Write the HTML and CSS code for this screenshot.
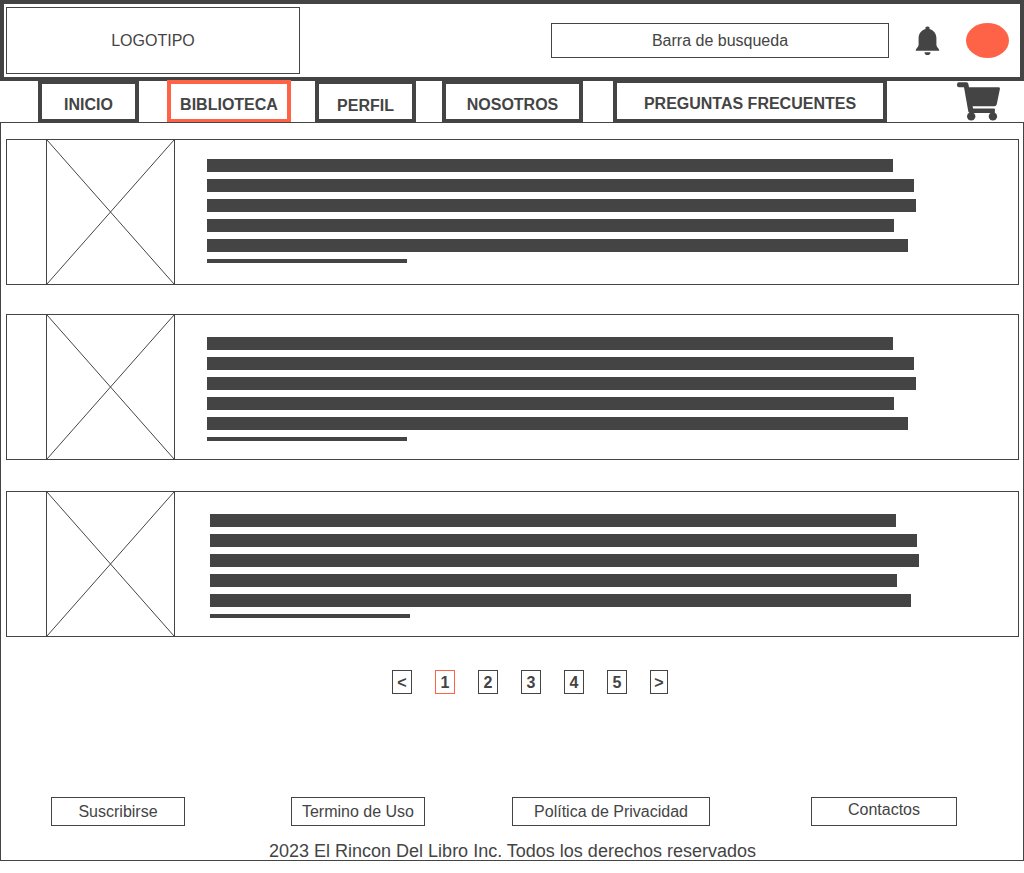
FILE: index.html
```html
<!DOCTYPE html>
<html lang="es">
<head>
<meta charset="utf-8">
<meta name="viewport" content="width=device-width, initial-scale=1">
<title>El Rincon Del Libro</title>
<link rel="stylesheet" href="styles.css">
</head>
<body>
<header class="header">
  <a class="logo" href="#">LOGOTIPO</a>
  <input class="search" type="text" placeholder="Barra de busqueda" aria-label="Barra de busqueda">
  <button class="icon-button bell" type="button" aria-label="Notificaciones">
    <svg width="25" height="30" viewBox="0 0 25 30" fill="currentColor" aria-hidden="true">
      <path d="M12.5.5a2 2 0 0 1 2 2.4C18.500 4 21.400 7.500 21.400 12V18.500C21.400 21.300 24 22 24.300 24.700H.7C1 22 3.600 21.300 3.600 18.500V12C3.600 7.500 6.500 4 10.500 2.900A2 2 0 0 1 12.500.5z"/>
      <path d="M9.500 26.200h6a3 2.800 0 0 1-6 0z"/>
    </svg>
  </button>
  <button class="avatar" type="button" aria-label="Cuenta"></button>
</header>

<nav class="nav" aria-label="Principal">
  <a class="tab inicio" href="#">INICIO</a>
  <a class="tab biblioteca active" href="#" aria-current="page">BIBLIOTECA</a>
  <a class="tab perfil" href="#">PERFIL</a>
  <a class="tab nosotros" href="#">NOSOTROS</a>
  <a class="tab preguntas" href="#">PREGUNTAS FRECUENTES</a>
  <button class="icon-button cart" type="button" aria-label="Carrito">
    <svg width="43" height="39" viewBox="0 0 43 39" fill="currentColor" aria-hidden="true">
      <path d="M2 .3H9.500Q11 .3 11.300 1.800L12 5.200H41.500Q43.200 5.200 42.900 6.900L39.700 22.400Q39.300 24.200 37.500 24.200H15.600L16.100 26.500H36.800Q38.200 26.500 38 28L37.700 30.900H13Q11.600 30.900 11.300 29.500L7 5.300H2A2 2 0 0 1 0 3.300V2.300A2 2 0 0 1 2 .3z"/>
      <circle cx="14.200" cy="34.400" r="4.200"/>
      <circle cx="35.900" cy="34.400" r="4.200"/>
    </svg>
  </button>
</nav>

<div class="frame">
  <main class="books">
    <article class="card first">
      <svg class="cover" viewBox="0 0 127 144" preserveAspectRatio="none" role="img" aria-label="Portada"><path d="M0 0L127 144M127 0L0 144"/></svg>
      <div class="lines"><i class="line a"></i><i class="line b"></i><i class="line c"></i><i class="line d"></i><i class="line e"></i><i class="line end"></i></div>
    </article>
    <article class="card">
      <svg class="cover" viewBox="0 0 127 144" preserveAspectRatio="none" role="img" aria-label="Portada"><path d="M0 0L127 144M127 0L0 144"/></svg>
      <div class="lines"><i class="line a"></i><i class="line b"></i><i class="line c"></i><i class="line d"></i><i class="line e"></i><i class="line end"></i></div>
    </article>
    <article class="card last">
      <svg class="cover" viewBox="0 0 127 144" preserveAspectRatio="none" role="img" aria-label="Portada"><path d="M0 0L127 144M127 0L0 144"/></svg>
      <div class="lines"><i class="line a"></i><i class="line b"></i><i class="line c"></i><i class="line d"></i><i class="line e"></i><i class="line end"></i></div>
    </article>
  </main>

  <nav class="pages" aria-label="Paginas">
    <a class="page" href="#">&lt;</a>
    <a class="page current" href="#" aria-current="page">1</a>
    <a class="page" href="#">2</a>
    <a class="page" href="#">3</a>
    <a class="page" href="#">4</a>
    <a class="page" href="#">5</a>
    <a class="page next" href="#">&gt;</a>
  </nav>

  <footer class="footer">
    <div class="links">
      <a class="link" href="#">Suscribirse</a>
      <a class="link terms" href="#">Termino de Uso</a>
      <a class="link privacy" href="#">Política de Privacidad</a>
      <a class="link contact" href="#">Contactos</a>
    </div>
    <p class="copyright">2023 El Rincon Del Libro Inc. Todos los derechos reservados</p>
  </footer>
</div>
</body>
</html>
```
FILE: styles.css
```css
:root {
  --ink: #444;
  --accent: #ff6347;
}

* {
  box-sizing: border-box;
}

body {
  margin: 0;
  background: #fff;
  color: var(--ink);
  font: 16px/20px "Liberation Sans", Arial, sans-serif;
}

a {
  color: inherit;
  text-decoration: none;
}

.header {
  display: flex;
  align-items: center;
  padding: 3px 11px 3px 2px;
  border: 4px solid var(--ink);
}

.logo {
  display: flex;
  align-items: center;
  justify-content: center;
  flex: 0 1 294px;
  height: 67px;
  border: 1px solid var(--ink);
}

.search {
  flex: 0 1 338px;
  min-width: 0;
  height: 35px;
  margin: 0 26px 0 auto;
  padding: 0 8px;
  border: 1px solid var(--ink);
  border-radius: 0;
  background: #fff;
  color: var(--ink);
  font: inherit;
  text-align: center;
  appearance: none;
}

.search::placeholder {
  color: var(--ink);
  opacity: 1;
}

.icon-button {
  flex: none;
  padding: 0;
  border: 0;
  background: none;
  color: var(--ink);
}

.icon-button svg {
  display: block;
}

.avatar {
  flex: none;
  width: 43px;
  height: 35px;
  margin-left: 26px;
  padding: 0;
  border: 0;
  border-radius: 50%;
  background: var(--accent);
}

.nav {
  display: flex;
  align-items: flex-end;
  margin: -2px 0 -1px;
  padding: 0 24px 0 38px;
}

.tab {
  flex: 0 1 auto;
  height: 43px;
  padding-top: 11px;
  border: 4px solid var(--ink);
  font-weight: 700;
  text-align: center;
  white-space: nowrap;
}

.inicio {
  width: 101px;
}

.biblioteca {
  width: 124px;
  margin-left: 28px;
}

.tab.active {
  border-color: var(--accent);
}

.perfil {
  width: 101px;
  margin-left: 24px;
  padding-top: 12px;
}

.nosotros {
  width: 141px;
  margin-left: 26px;
}

.preguntas {
  width: 274px;
  height: 44px;
  margin-left: 30px;
}

.cart {
  margin: 0 0 2px auto;
}

.frame {
  position: relative;
  padding: 16px 4px 0 5px;
  border: 1px solid var(--ink);
}

.books {
  display: flex;
  flex-direction: column;
  gap: 29px;
}

.card {
  display: flex;
  align-items: flex-start;
  min-height: 146px;
  padding-left: 39px;
  border: 1px solid var(--ink);
}

.card.last {
  margin-top: 2px;
}

.cover {
  flex: none;
  width: 129px;
  height: 144px;
  border: solid var(--ink);
  border-width: 0 1px;
  fill: none;
  stroke: var(--ink);
  stroke-width: 1;
}

.lines {
  display: flex;
  flex-direction: column;
  flex: 0 1 709px;
  gap: 7px;
  margin: 22px 0 0 32px;
}

.first .lines {
  margin-top: 19px;
}

.last .lines {
  margin-left: 35px;
}

.line {
  height: 13px;
  background: var(--ink);
}

.a {
  width: 96.8%;
}

.b {
  width: 99.7%;
}

.c {
  width: 100%;
}

.d {
  width: 96.9%;
}

.e {
  width: 98.9%;
}

.end {
  width: 28.2%;
  height: 4px;
}

.pages {
  display: flex;
  justify-content: center;
  gap: 23px;
  margin-top: 33px;
  padding-left: 35px;
}

.page {
  width: 20px;
  height: 24px;
  border: 1px solid var(--ink);
  font-weight: 700;
  line-height: 24px;
  text-align: center;
}

.current {
  border-color: var(--accent);
}

.next {
  width: 18px;
}

.footer {
  margin-top: 103px;
}

.links {
  display: flex;
  padding: 0 20px 0 45px;
}

.link {
  flex: 0 1 auto;
  width: 134px;
  padding: 4px 0 3px;
  border: 1px solid var(--ink);
  text-align: center;
}

.terms {
  margin-left: 106px;
}

.privacy {
  width: 198px;
  margin-left: 87px;
}

.contact {
  width: 146px;
  margin-left: 101px;
  padding: 2px 0 5px;
}

.copyright {
  margin: 16px 0 0;
  font-size: 18px;
  line-height: 18px;
  text-align: center;
}
```
